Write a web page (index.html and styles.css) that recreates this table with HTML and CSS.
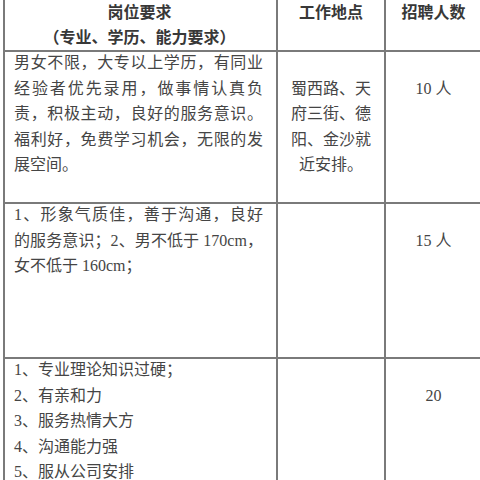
FILE: index.html
```html
<!DOCTYPE html>
<html lang="zh-CN">
<head>
<meta charset="utf-8">
<title>招聘岗位</title>
<link rel="stylesheet" href="styles.css">
</head>
<body>
<table class="jobs">
  <colgroup>
    <col class="c-req">
    <col class="c-loc">
    <col class="c-num">
  </colgroup>
  <thead>
    <tr class="head">
      <th class="req-h">岗位要求<br>（专业、学历、能力要求）</th>
      <th>工作地点</th>
      <th>招聘人数</th>
    </tr>
  </thead>
  <tbody>
    <tr class="row r1">
      <td class="req"><div class="txt">
        <span class="ln">男女不限，大专以上学历，有同业</span>
        <span class="ln">经验者优先录用，做事情认真负</span>
        <span class="ln">责，积极主动，良好的服务意识。</span>
        <span class="ln">福利好，免费学习机会，无限的发</span>
        <span class="ln end">展空间。</span>
      </div></td>
      <td class="loc"><div class="txt">蜀西路、天<br>府三街、德<br>阳、金沙就<br>近安排。</div></td>
      <td class="num"><div class="txt">10 人</div></td>
    </tr>
    <tr class="row r2">
      <td class="req"><div class="txt">
        <span class="ln">1、形象气质佳，善于沟通，良好</span>
        <span class="ln">的服务意识；2、男不低于 170cm，</span>
        <span class="ln end">女不低于 160cm；</span>
      </div></td>
      <td class="loc"></td>
      <td class="num"><div class="txt">15 人</div></td>
    </tr>
    <tr class="row r3">
      <td class="req"><div class="txt">1、专业理论知识过硬；<br>2、有亲和力<br>3、服务热情大方<br>4、沟通能力强<br>5、服从公司安排</div></td>
      <td class="loc"></td>
      <td class="num"><div class="txt">20</div></td>
    </tr>
  </tbody>
</table>
</body>
</html>
```

FILE: styles.css
```css
html, body {
  margin: 0;
  padding: 0;
  background: #ffffff;
  overflow: hidden;
}

body {
  width: 480px;
  height: 480px;
  font-family: "Liberation Serif", "Noto Sans CJK SC", serif;
  font-size: 16px;
  color: #454545;
}

.jobs {
  margin-left: 3px;
  margin-top: 0;
  border-collapse: separate;
  border-spacing: 0;
  table-layout: fixed;
  width: 480px;
  border-left: 2px solid #7a7a7a;
}

.c-req { width: 273px; }
.c-loc { width: 108px; }
.c-num { width: 97px; }

.jobs th,
.jobs td {
  box-sizing: border-box;
  border-right: 2px solid #7a7a7a;
  border-bottom: 2px solid #7a7a7a;
  vertical-align: top;
  line-height: 25.6px;
  padding: 0;
}

.jobs th {
  font-weight: 700;
  text-align: center;
  line-height: 25px;
  height: 51px;
  color: #383838;
}

.jobs th.req-h {
  padding-right: 2px;
}

.r1 td { height: 152px; }
.r2 td { height: 155px; }
.r3 td { height: 140px; }

.txt {
  margin-top: -2px;
}

.jobs td.req {
  padding: 0 13px 0 9px;
  text-align: left;
}

.ln {
  display: block;
  text-align: justify;
  text-align-last: justify;
}

.ln.end {
  text-align-last: left;
}

.jobs td.loc {
  text-align: center;
  padding-top: 25.6px;
}

.jobs td.num {
  text-align: center;
  padding-top: 25.6px;
}
```
